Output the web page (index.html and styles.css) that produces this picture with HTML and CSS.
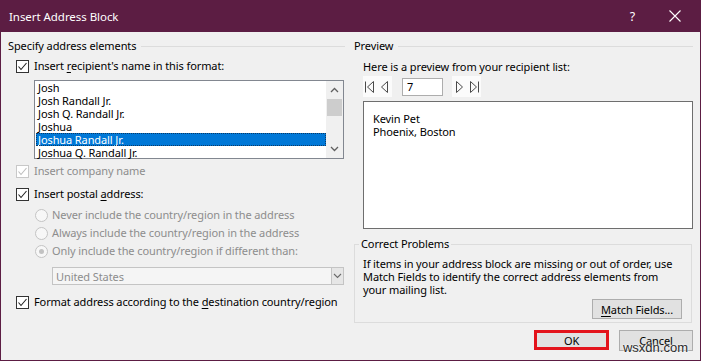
FILE: index.html
```html
<!DOCTYPE html>
<html lang="en">
<head>
    <meta charset="UTF-8">
    <title>Insert Address Block</title>
    <link rel="stylesheet" href="styles.css">
</head>
<body>
    <div class="dialog">
        <div class="titlebar">
            <span class="title">Insert Address Block</span>
            <span class="help">?</span>
            <svg class="close" width="12" height="12" viewBox="0 0 12 12"><path d="M0.5 0.5 L11.5 11.5 M11.5 0.5 L0.5 11.5" stroke="#fff" stroke-width="1.1" fill="none"/></svg>
        </div>

        <div class="content">
            <!-- left column -->
            <div class="col left">
                <div class="group-head"><span>Specify address elements</span><span class="rule"></span></div>

                <div class="check row-name">
                    <span class="box"><svg width="11" height="11" viewBox="0 0 11 11"><polyline points="1.5,5.5 4,8.5 9.5,2" stroke="#222" stroke-width="1.1" fill="none"/></svg></span>
                    <span>Insert <u>r</u>ecipient's name in this format:</span>
                </div>

                <div class="listbox">
                    <ul class="items">
                        <li>Josh</li>
                        <li>Josh Randall Jr.</li>
                        <li>Josh Q. Randall Jr.</li>
                        <li>Joshua</li>
                        <li class="selected">Joshua Randall Jr.</li>
                        <li>Joshua Q. Randall Jr.</li>
                    </ul>
                    <div class="scrollbar">
                        <svg class="arr" width="9" height="6" viewBox="0 0 9 6"><polyline points="1,5 4.5,1.5 8,5" stroke="#606060" stroke-width="1.3" fill="none"/></svg>
                        <span class="thumb"></span>
                        <span class="track"></span>
                        <svg class="arr" width="9" height="6" viewBox="0 0 9 6"><polyline points="1,1 4.5,4.5 8,1" stroke="#606060" stroke-width="1.3" fill="none"/></svg>
                    </div>
                </div>

                <div class="check disabled row-company">
                    <span class="box"><svg width="11" height="11" viewBox="0 0 11 11"><polyline points="1.5,5.5 4,8.5 9.5,2" stroke="#bdbdbd" stroke-width="1.1" fill="none"/></svg></span>
                    <span>Insert company name</span>
                </div>

                <div class="check row-postal">
                    <span class="box"><svg width="11" height="11" viewBox="0 0 11 11"><polyline points="1.5,5.5 4,8.5 9.5,2" stroke="#222" stroke-width="1.1" fill="none"/></svg></span>
                    <span>Insert postal <u>a</u>ddress:</span>
                </div>

                <div class="radio first"><span class="dot"></span><span>Never include the country/region in the address</span></div>
                <div class="radio"><span class="dot"></span><span>Always include the country/region in the address</span></div>
                <div class="radio"><span class="dot on"></span><span>Only include the country/region if different than:</span></div>

                <div class="dropdown">
                    <span class="value">United States</span>
                    <span class="drop-btn"><svg width="9" height="6" viewBox="0 0 9 6"><polyline points="1,1 4.5,4.5 8,1" stroke="#6a6a6a" stroke-width="1.1" fill="none"/></svg></span>
                </div>

                <div class="check row-format">
                    <span class="box"><svg width="11" height="11" viewBox="0 0 11 11"><polyline points="1.5,5.5 4,8.5 9.5,2" stroke="#222" stroke-width="1.1" fill="none"/></svg></span>
                    <span>Format address according to the <u>d</u>estination country/region</span>
                </div>
            </div>

            <!-- right column -->
            <div class="col right">
                <div class="group-head"><span>Preview</span><span class="rule"></span></div>
                <div class="hint">Here is a preview from your recipient list:</div>

                <div class="nav">
                    <div class="nav-pair">
                        <span class="nav-btn"><svg width="12" height="12" viewBox="0 0 12 12"><path d="M1.5 0.5 V11.5 M9.5 0.5 L3.5 6 L9.5 11.5 Z" stroke="#4a4a4a" stroke-width="1" fill="none"/></svg></span>
                        <span class="nav-btn"><svg width="12" height="12" viewBox="0 0 12 12"><path d="M8.5 0.5 L2.5 6 L8.5 11.5 Z" stroke="#4a4a4a" stroke-width="1" fill="none"/></svg></span>
                    </div>
                    <div class="record">7</div>
                    <div class="nav-pair">
                        <span class="nav-btn"><svg width="12" height="12" viewBox="0 0 12 12"><path d="M3.5 0.5 L9.5 6 L3.5 11.5 Z" stroke="#4a4a4a" stroke-width="1" fill="none"/></svg></span>
                        <span class="nav-btn"><svg width="12" height="12" viewBox="0 0 12 12"><path d="M10.5 0.5 V11.5 M2.5 0.5 L8.5 6 L2.5 11.5 Z" stroke="#4a4a4a" stroke-width="1" fill="none"/></svg></span>
                    </div>
                </div>

                <div class="preview">
                    <div>Kevin Pet</div>
                    <div>Phoenix, Boston</div>
                </div>

                <div class="problems">
                    <div class="legend">Correct Problems</div>
                    <p>If items in your address block are missing or out of order, use Match Fields to identify the correct address elements from your mailing list.</p>
                    <div class="match-row"><button class="btn match"><u>M</u>atch Fields...</button></div>
                </div>

                <div class="actions">
                    <button class="btn ok">OK</button>
                    <button class="btn cancel">Cancel</button>
                </div>
            </div>
        </div>

        <div class="watermark">wsxdn.com</div>
    </div>
</body>
</html>
```

FILE: styles.css
```css
body {
    margin: 0;
    font-family: "Noto Sans", "Open Sans", sans-serif;
    font-size: 11px;
    letter-spacing: -0.1px;
    color: #000;
}

.dialog {
    position: relative;
    width: 699px;
    height: 360px;
    border: 1px solid #5c1d43;
    border-top: none;
    background-color: #f0f0f0;
    overflow: hidden;
}

/* title bar */
.titlebar {
    height: 32px;
    background-color: #5c1d43;
    color: #fff;
    display: flex;
    align-items: center;
    padding-left: 8px;
}

.title {
    flex: 1;
    font-size: 11.5px;
    letter-spacing: -0.05px;
}

.help {
    font-size: 12.5px;
    margin-right: 34px;
}

.close {
    margin-right: 19px;
}

/* columns */
.content {
    display: flex;
    gap: 9px;
    padding: 7px 7px 0 7px;
}

.col {
    display: flex;
    flex-direction: column;
}

.left {
    width: 337px;
}

.right {
    width: 339px;
}

.group-head {
    display: flex;
    align-items: center;
    gap: 5px;
    height: 14px;
    line-height: 14px;
}

.group-head .rule {
    flex: 1;
    height: 1px;
    background-color: #dcdcdc;
}

/* checkboxes */
.check {
    display: flex;
    align-items: center;
    gap: 5px;
    height: 14px;
    line-height: 14px;
    margin-left: 8px;
    white-space: nowrap;
}

.check .box {
    width: 11px;
    height: 11px;
    border: 1px solid #333;
    background-color: #fff;
    display: flex;
}

.check.disabled {
    color: #8d8d8d;
}

.check.disabled .box {
    border-color: #c8c8c8;
}

.row-name { margin-top: 6px; }
.row-company { margin-top: 5px; }
.row-postal { margin-top: 9px; }
.row-format { margin-top: 10px; }

u {
    text-decoration-thickness: 1px;
    text-underline-offset: 2px;
}

/* list box */
.listbox {
    margin: 7px 0 0 26px;
    width: 308px;
    height: 77px;
    border: 1px solid #828790;
    background-color: #fff;
    display: flex;
}

.items {
    list-style: none;
    margin: 0;
    padding: 0;
    flex: 1;
}

.items li {
    height: 13px;
    line-height: 13px;
    padding-left: 2px;
    margin-left: 1px;
    white-space: nowrap;
}

.items li.selected {
    background-color: #0078d7;
    color: #fff;
    outline: 1px dotted #0b3a66;
    outline-offset: -1px;
}

.scrollbar {
    width: 17px;
    background-color: #f0f0f0;
    display: flex;
    flex-direction: column;
    align-items: center;
}

.scrollbar .arr {
    margin: 6px 0;
}

.scrollbar .thumb {
    width: 15px;
    height: 17px;
    background-color: #cdcdcd;
}

.scrollbar .track {
    flex: 1;
}

/* radios */
.radio {
    display: flex;
    align-items: center;
    gap: 4px;
    height: 14px;
    line-height: 14px;
    margin: 4px 0 0 27px;
    color: #8d8d8d;
    white-space: nowrap;
}

.radio.first {
    margin-top: 7px;
}

.radio .dot {
    width: 11px;
    height: 11px;
    border: 1px solid #c4c4c4;
    border-radius: 50%;
    background-color: #f7f7f7;
    display: flex;
    align-items: center;
    justify-content: center;
}

.radio .dot.on::after {
    content: "";
    width: 5px;
    height: 5px;
    border-radius: 50%;
    background-color: #c2c2c2;
}

/* dropdown */
.dropdown {
    margin: 9px 0 0 44px;
    width: 290px;
    height: 16px;
    border: 1px solid #c4c4c4;
    background-color: #f5f5f5;
    display: flex;
    align-items: center;
    color: #8d8d8d;
}

.dropdown .value {
    flex: 1;
    padding-left: 3px;
}

.drop-btn {
    width: 11px;
    height: 16px;
    border-left: 1px solid #c4c4c4;
    background-color: #e6e6e6;
    display: flex;
    align-items: center;
    justify-content: center;
}

/* preview side */
.hint {
    margin: 7px 0 0 9px;
    height: 14px;
    line-height: 14px;
}

.nav {
    display: flex;
    align-items: center;
    height: 21px;
    margin: 2px 0 0 9px;
}

.nav-pair {
    display: flex;
    height: 21px;
    background-color: #fbfbfb;
}

.nav-btn {
    width: 14.5px;
    display: flex;
    align-items: center;
    justify-content: center;
}

.record {
    width: 35px;
    height: 16px;
    line-height: 16px;
    border: 1px solid #adadad;
    background-color: #fff;
    padding-left: 4px;
    margin: 0 9px 0 10px;
}

.preview {
    margin: 4px 0 0 9px;
    height: 116px;
    border: 1px solid #6e6e6e;
    background-color: #fff;
    padding: 10px 0 0 9px;
    line-height: 13px;
}

.problems {
    margin: 15px 1px 0 0;
    border: 1px solid #dcdcdc;
    padding: 0 8px 3px 8px;
}

.legend {
    width: fit-content;
    margin: -8px 0 0 -4px;
    padding: 0 2px;
    line-height: 14px;
    background-color: #f0f0f0;
}

.problems p {
    margin: 6px 0 0 0;
    line-height: 13px;
}

.match-row {
    display: flex;
    justify-content: flex-end;
    margin-top: 3px;
}

.btn {
    font-family: inherit;
    font-size: 11px;
    letter-spacing: -0.1px;
    background-color: #e1e1e1;
    border: 1px solid #adadad;
    color: #000;
    padding: 0;
}

.match {
    width: 90px;
    height: 20px;
    margin-right: 1px;
}

.actions {
    display: flex;
    justify-content: flex-end;
    gap: 10px;
    margin-top: 7px;
}

.ok {
    width: 75px;
    height: 20px;
    border: 3px solid #e3131b;
}

.cancel {
    width: 74px;
    height: 21px;
}

.watermark {
    position: absolute;
    right: 12px;
    bottom: 5px;
    font-family: "Liberation Sans", Arial, sans-serif;
    font-size: 13px;
    letter-spacing: 0;
    color: #2a2a2a;
    text-shadow: 0 0 2px #fff, 0 0 2px #fff;
}
```
